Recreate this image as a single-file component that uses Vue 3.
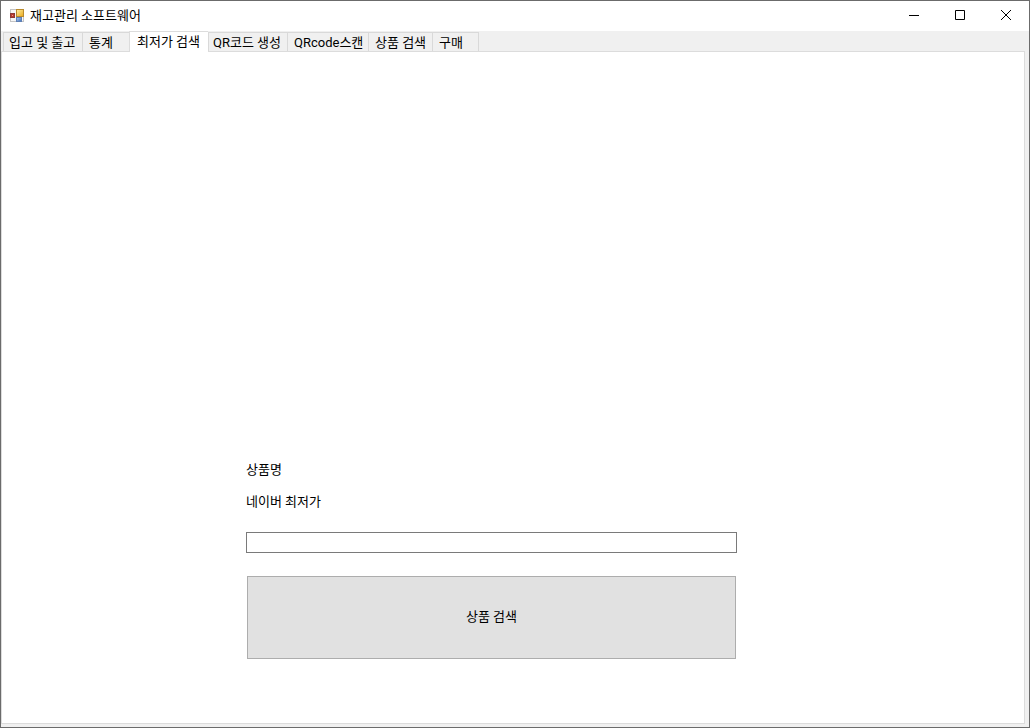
<script setup>
import { ref } from 'vue'

const tabs = [
  { label: '입고 및 출고', size: 'w79' },
  { label: '통계', size: 'w47' },
  { label: '최저가 검색', size: 'w79' },
  { label: 'QR코드 생성', size: 'w79' },
  { label: 'QRcode스캔', size: 'w81' },
  { label: '상품 검색', size: 'w64' },
  { label: '구매', size: 'w47' },
]
const active = ref(2)
const query = ref('')
</script>

<template>
  <div class="window">
    <header class="titlebar">
      <svg class="app-icon" width="14" height="14" viewBox="0 0 14 14" aria-hidden="true">
        <defs>
          <linearGradient id="gold" x1="0" y1="0" x2="1" y2="1">
            <stop offset="0" stop-color="#fff0a8" />
            <stop offset="1" stop-color="#e8a818" />
          </linearGradient>
          <linearGradient id="blue" x1="0" y1="0" x2="1" y2="1">
            <stop offset="0" stop-color="#b4d0f4" />
            <stop offset="1" stop-color="#3b6cb8" />
          </linearGradient>
        </defs>
        <rect x="0.5" y="0.5" width="13" height="12" fill="#f7f7f7" stroke="#c4c4c4" />
        <rect x="0.5" y="4.5" width="4" height="4" fill="#b83a30" stroke="#8d3a36" />
        <rect x="2" y="6" width="1" height="1" fill="#ec9a88" />
        <rect x="6.5" y="0.5" width="7" height="7" fill="url(#gold)" stroke="#b98a2c" />
        <rect x="6.5" y="8.5" width="5" height="4" fill="url(#blue)" stroke="#5f80b4" />
      </svg>
      <h1 class="title">재고관리 소프트웨어</h1>
      <div class="controls">
        <button type="button" class="control" aria-label="최소화">
          <svg width="10" height="10" viewBox="0 0 10 10"><path d="M0 5.5H10" /></svg>
        </button>
        <button type="button" class="control" aria-label="최대화">
          <svg width="10" height="10" viewBox="0 0 10 10"><path d="M.5 .5H9.5V9.5H.5Z" /></svg>
        </button>
        <button type="button" class="control" aria-label="닫기">
          <svg width="10" height="10" viewBox="0 0 10 10"><path d="M0 0L10 10M10 0L0 10" /></svg>
        </button>
      </div>
    </header>

    <main class="client">
      <div class="tabs" role="tablist">
        <button
          v-for="(tab, i) in tabs"
          :id="'tab-' + i"
          :key="tab.label"
          type="button"
          role="tab"
          class="tab"
          :class="[tab.size, { active: active === i }]"
          :aria-selected="active === i"
          @click="active = i"
        >{{ tab.label }}</button>
      </div>
      <section class="page" role="tabpanel" :aria-labelledby="'tab-' + active">
        <form v-if="active === 2" class="search" @submit.prevent>
          <label class="label" for="product">상품명</label>
          <p class="label">네이버 최저가</p>
          <input id="product" v-model="query" class="field" type="text" />
          <button class="submit" type="submit">상품 검색</button>
        </form>
      </section>
    </main>
  </div>
</template>

<style>
body {
  background: #fff;
}
</style>

<style scoped>
.window,
.window * {
  box-sizing: border-box;
}
.window {
  display: flex;
  flex-direction: column;
  min-height: 100vh;
  border: 1px solid #6b6b6b;
  background: #fff;
  color: #000;
  font-family: Roboto, "Noto Sans CJK KR", sans-serif;
  font-size: 13px;
  font-weight: 400;
  line-height: 20px;
}
button,
input {
  margin: 0;
  color: inherit;
  font: inherit;
}
.titlebar {
  display: flex;
  align-items: center;
  height: 30px;
  padding-left: 9px;
}
.app-icon {
  flex: none;
}
.title {
  flex: 1;
  margin: 0 0 0 6px;
  font-size: 13px;
  font-weight: 400;
}
.controls {
  display: flex;
  height: 100%;
}
.control {
  display: flex;
  align-items: center;
  justify-content: center;
  width: 46px;
  padding: 0 0 2px;
  border: 0;
  background: none;
}
.control svg {
  fill: none;
  stroke: #000;
  stroke-width: 1;
}
.client {
  display: flex;
  flex: 1;
  flex-direction: column;
  padding: 0 4px 3px 0;
  background: #f0f0f0;
}
.tabs {
  display: flex;
  align-items: flex-end;
  height: 21px;
  padding-left: 2px;
}
.tab {
  height: 19px;
  margin-bottom: 1px;
  padding: 0 0 0 6px;
  border: 1px solid #d9d9d9;
  border-width: 1px 0 0 1px;
  background: #f0f0f0;
  line-height: 20px;
  text-align: left;
  white-space: nowrap;
}
.tab:first-child {
  padding-left: 5px;
}
.tab:last-child {
  border-right-width: 1px;
}
.tab.active {
  height: 21px;
  margin-bottom: 0;
  padding: 0 0 2px 7px;
  border-color: #dcdcdc;
  background: #fff;
  z-index: 1;
}
.tab.active + .tab {
  padding-left: 4px;
}
.w47 { width: 47px; }
.w64 { width: 64px; }
.w79 { width: 79px; }
.w81 { width: 81px; }
.page {
  display: grid;
  flex: 1;
  grid-template-columns: 244fr 491fr 287fr;
  align-items: end;
  margin-top: -1px;
  padding-bottom: 64px;
  border: 1px solid #dcdcdc;
  background: #fff;
}
.search {
  display: flex;
  grid-column: 2;
  flex-direction: column;
}
.label {
  margin: 0 0 12px;
}
.field {
  width: 100%;
  height: 21px;
  margin: 8px 0 23px;
  padding: 0 4px;
  border: 1px solid #7a7a7a;
  border-radius: 0;
  background: #fff;
}
.submit {
  height: 83px;
  margin: 0 1px;
  padding: 0 0 2px;
  border: 1px solid #adadad;
  background: #e1e1e1;
}
</style>
